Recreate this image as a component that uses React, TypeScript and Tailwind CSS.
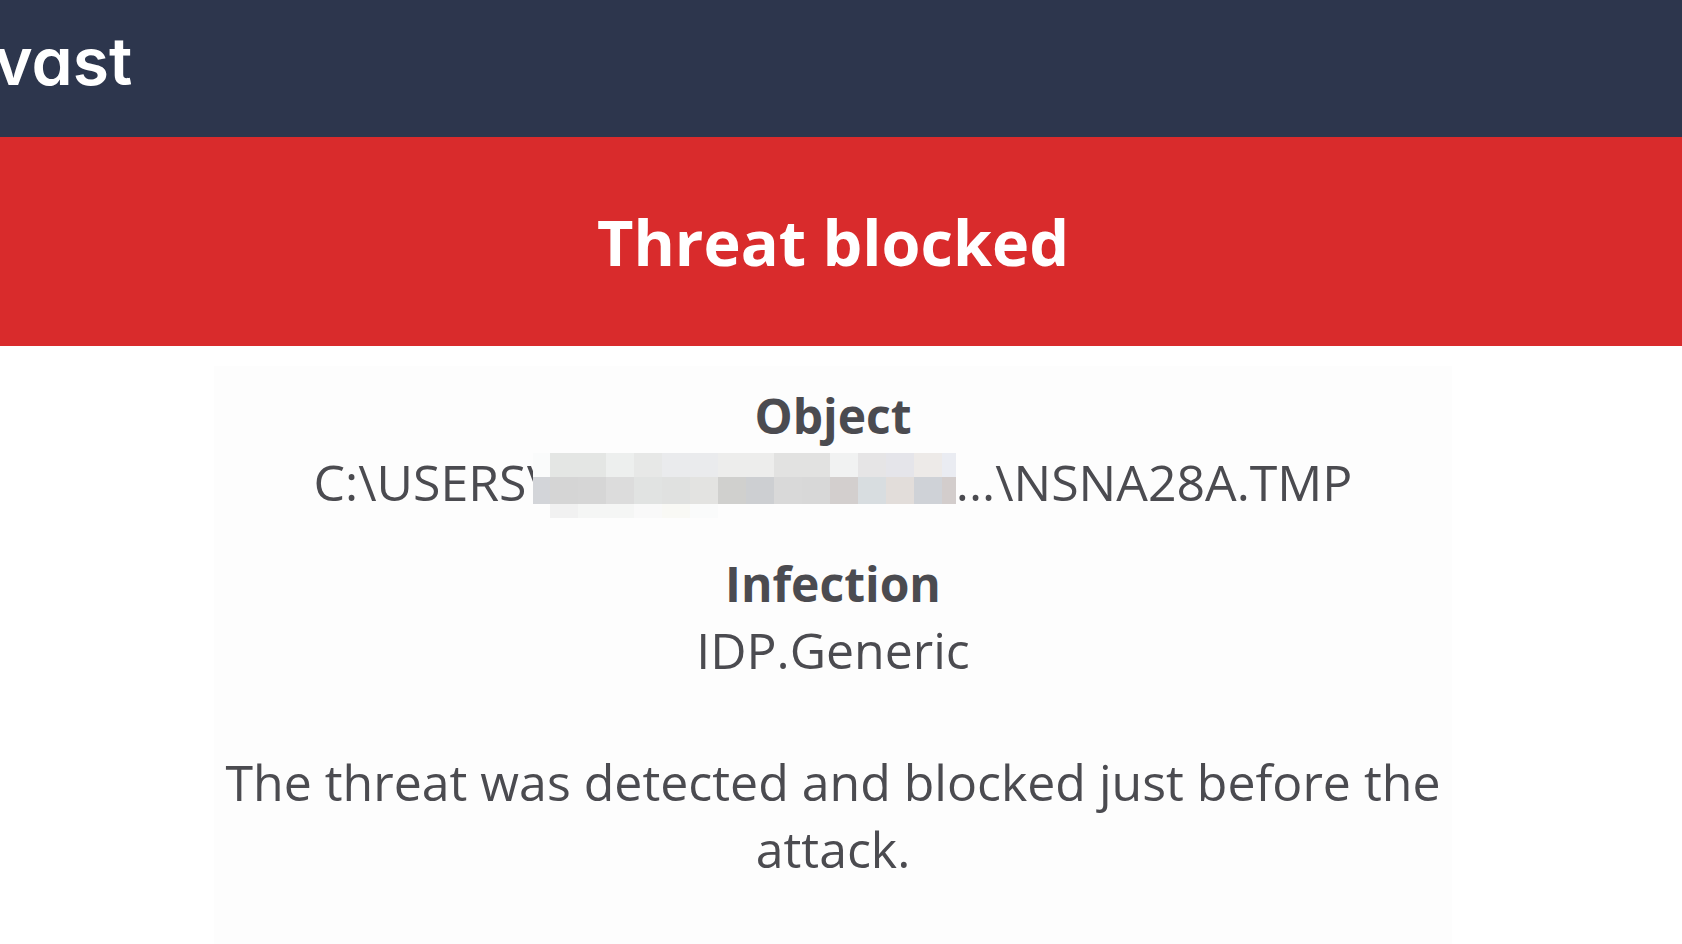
const TOP = ["#fafbfb", "#e4e6e4", "#e4e6e4", "#edefee", "#e7e8e7", "#eaebed", "#eaebed", "#ededec", "#ededec", "#e2e2e1", "#e2e2e1", "#f1f2f2", "#e6e5e6", "#e5e5ea", "#edeae8", "#eaecf2"];
const MIDDLE = ["#d3d5d9", "#d5d5d5", "#d6d6d6", "#dcdcdc", "#e1e3e2", "#e0e1e0", "#e3e3e1", "#d0d0ce", "#cdcfd2", "#d9d9d9", "#d8d8d8", "#d3cfce", "#d8dde0", "#e2ddda", "#cfd2d7", "#d3cdcc"];
const BOTTOM = ["#fdfdfd", "#f1f1f1", "#f5f6f5", "#f5f6f5", "#f9f9f9", "#f9f9f5", "#fafbfb"];

const ROWS = [
  { y: 0, height: 24, cells: TOP },
  { y: 24, height: 27, cells: MIDDLE },
  { y: 51, height: 14, cells: BOTTOM },
];

// The first column is 17 wide and the last is cut to 14; all others are 28.
function Mosaic() {
  return (
    <svg
      className="-ml-3 mt-1 h-[65px] w-[423px] shrink-0"
      viewBox="0 0 423 65"
      shapeRendering="crispEdges"
      role="img"
      aria-label="Redacted folder name"
    >
      {ROWS.map((row) =>
        row.cells.map((fill, i) => (
          <rect
            key={`${row.y}-${i}`}
            x={i === 0 ? 0 : 17 + (i - 1) * 28}
            y={row.y}
            width={i === 0 ? 17 : 28}
            height={row.height}
            fill={fill}
          />
        )),
      )}
    </svg>
  );
}

export default function App() {
  return (
    <div className="flex min-h-screen flex-col bg-white font-['Open_Sans',sans-serif] text-[#4b4b50]">
      <header className="flex h-[137px] items-center overflow-hidden bg-[#2d364d]">
        <span className="-ml-1.5 -mt-4 font-['Inter',sans-serif] text-[66px] leading-none font-semibold text-white [font-feature-settings:'cv11']">
          vast
        </span>
      </header>

      <section className="flex h-[209px] items-center justify-center bg-[#d92b2c] pr-4">
        <h1 className="text-[63px] leading-[87px] font-bold text-white">Threat blocked</h1>
      </section>

      <main className="flex grow justify-center pr-4">
        <div className="mt-5 flex w-[1238px] flex-col bg-[#fdfdfd] pt-4 text-center text-[50px] leading-[67px]">
          <dl>
            <dt className="text-[48px] font-bold">Object</dt>
            <dd className="mb-[34px] flex h-[67px] items-start justify-center whitespace-nowrap">
              <span>C:\USERS\</span>
              <Mosaic />
              <span>...\NSNA28A.TMP</span>
            </dd>
            <dt className="text-[48px] font-bold">Infection</dt>
            <dd>IDP.Generic</dd>
          </dl>
          <p className="mt-[65px]">The threat was detected and blocked just before the attack.</p>
        </div>
      </main>
    </div>
  );
}
